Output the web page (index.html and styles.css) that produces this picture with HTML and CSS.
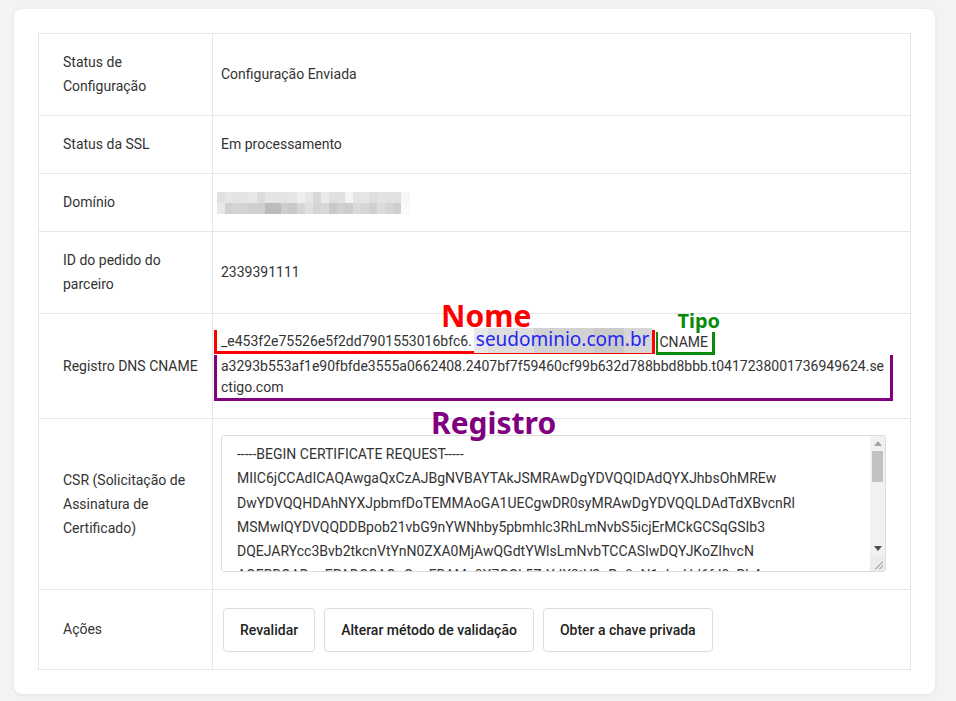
FILE: index.html
```html
<!DOCTYPE html>
<html lang="pt-BR">
<head>
    <meta charset="UTF-8">
    <meta name="viewport" content="width=device-width, initial-scale=1.0">
    <title>Detalhes do certificado SSL</title>
    <link rel="stylesheet" href="styles.css">
</head>
<body>
    <div class="card">
        <table class="details">
            <colgroup>
                <col class="col-label">
                <col>
            </colgroup>
            <tr>
                <td class="label">Status de Configuração</td>
                <td>Configuração Enviada</td>
            </tr>
            <tr>
                <td class="label">Status da SSL</td>
                <td>Em processamento</td>
            </tr>
            <tr>
                <td class="label">Domínio</td>
                <td>
                    <div class="blurred">
                        <div class="blur-row blur-top"></div>
                        <div class="blur-row blur-bottom"></div>
                    </div>
                </td>
            </tr>
            <tr>
                <td class="label">ID do pedido do parceiro</td>
                <td>2339391111</td>
            </tr>
            <tr>
                <td class="label">Registro DNS CNAME</td>
                <td>
                    <div class="dns-line">
                        <span class="mark mark-nome"><span class="mark-label">Nome</span>_e453f2e75526e5f2dd7901553016bfc6.<span class="domain-blur">seudominio.com.br</span></span>
                        <span class="mark mark-tipo"><span class="mark-label">Tipo</span>CNAME</span>
                    </div>
                    <div class="mark mark-registro">a3293b553af1e90fbfde3555a0662408.2407bf7f59460cf99b632d788bbd8bbb.t0417238001736949624.sectigo.com<span class="mark-label">Registro</span></div>
                </td>
            </tr>
            <tr>
                <td class="label">CSR (Solicitação de Assinatura de Certificado)</td>
                <td>
                    <div class="csr-box">
                        <textarea class="csr" readonly>-----BEGIN CERTIFICATE REQUEST-----
MIIC6jCCAdICAQAwgaQxCzAJBgNVBAYTAkJSMRAwDgYDVQQIDAdQYXJhbsOhMREw
DwYDVQQHDAhNYXJpbmfDoTEMMAoGA1UECgwDR0syMRAwDgYDVQQLDAdTdXBvcnRl
MSMwIQYDVQQDDBpob21vbG9nYWNhby5pbmhlc3RhLmNvbS5icjErMCkGCSqGSIb3
DQEJARYcc3Bvb2tkcnVtYnN0ZXA0MjAwQGdtYWlsLmNvbTCCASIwDQYJKoZIhvcN
AQEBBQADggEPADCCAQoCggEBAMq0X7GGk5ZrYdX3tV2oPq8uN1cLwHd6fJ0sRb4e
Tz9mKc2QvW3yE7hLr5nD8pB1xF6gUaJ0tYv4oNsZ2iCkM9eHwR3qAjlP7bXfG5Vd
q1sOeT8rK4mN0cHyL2aWzJ6vUxB9iE3gDtP5fQ7oRlYs1hCnA8kVbM2wZjGu6eXa
H4dT0pS9yLqF3rNvC7mKe1Wt5oBzQg2xJiU8aEhR6lYcP4nMs0DfVkO9bTw3GuXj
L7qZ2eAr5yHn1cWd8KpI4vSx0gBtF6mQoE3zNlU9hRj2aCkY7sPwV1iTbD5fGuMe
0rXn4OqL8yJc2tZv6HaK1sWmE9pBd3gFiN7lUoR5xQjC0kYbT4eVzS8wPhA2nMuG
c6DfI1yLq9sOa3tWvX7bRk5mEz0JgN2pHuC4iQ8rYlF6oTwKd1eSxB9nVhA3jPuZ
m5Gz8QbE2rLk0yWt7vNc4aH1sJdXo6pUiF9gMeT3qRlK5wCxD8nYbV2hAjO0zSuI
-----END CERTIFICATE REQUEST-----</textarea>
                        <div class="scrollbar">
                            <div class="sb-btn">
                                <svg width="8" height="5" viewBox="0 0 8 5"><path d="M0 5h8L4 0z" fill="#a3a3a3"/></svg>
                            </div>
                            <div class="sb-track"><div class="sb-thumb"></div></div>
                            <div class="sb-btn">
                                <svg width="8" height="5" viewBox="0 0 8 5"><path d="M0 0h8L4 5z" fill="#505050"/></svg>
                            </div>
                            <div class="sb-corner">
                                <svg width="15" height="15" viewBox="0 0 15 15"><path d="M13 5.5L5.5 13M13 9.5L9.5 13" stroke="#7a7a7a" stroke-width="1"/></svg>
                            </div>
                        </div>
                    </div>
                </td>
            </tr>
            <tr>
                <td class="label">Ações</td>
                <td>
                    <div class="actions">
                        <button type="button" class="btn">Revalidar</button>
                        <button type="button" class="btn">Alterar método de validação</button>
                        <button type="button" class="btn">Obter a chave privada</button>
                    </div>
                </td>
            </tr>
        </table>
    </div>
</body>
</html>
```

FILE: styles.css
```css
body {
    margin: 0;
    padding: 9px 21px 8px 14px;
    background-color: #f3f3f3;
    font-family: Roboto, 'Liberation Sans', Arial, sans-serif;
    font-size: 14px;
    line-height: 24px;
    color: #333;
}
.card {
    width: 921px;
    box-sizing: border-box;
    padding: 24px;
    background-color: #fff;
    border-radius: 8px;
    box-shadow: 0 1px 4px rgba(0, 0, 0, 0.07);
}
.details {
    width: 100%;
    border-collapse: collapse;
    table-layout: fixed;
    border: 1px solid #e6e6e6;
}
.col-label {
    width: 174px;
}
.details td {
    border: 1px solid #e6e6e6;
    padding: 16px 8px 17px 8px;
    vertical-align: middle;
}
.details td.label {
    padding-left: 24px;
}

/* dominio borrado */
.blurred {
    width: 193px;
    margin: 1px 0 -1px -4px;
}
.blur-row {
    height: 11px;
}
.blur-top {
    background: linear-gradient(90deg,
        #e0e0e0 0 8px, #e6e6e6 8px 16px, #e3e3e3 16px 24px, #e5e5e5 24px 32px,
        #e8e8e8 32px 40px, #dcdcdc 40px 48px, #e6e6e6 48px 56px, #e4e4e4 56px 72px,
        #e6e6e6 72px 80px, #eeeeee 80px 88px, #e6e6e6 88px 96px, #d9d9d9 96px 104px,
        #eaeaea 104px 112px, #e0e0e0 112px 128px, #f4f4f4 128px 136px, #e3e3e3 136px 144px,
        #e6e6e6 144px 152px, #dedede 152px 160px, #e3e3e3 160px 168px, #e1e1e1 168px 184px,
        #f6f6f6 184px 193px);
}
.blur-bottom {
    background: linear-gradient(90deg,
        #e8e8e8 0 8px, #d0d0d0 8px 16px, #d4d4d4 16px 32px, #cfcfcf 32px 48px,
        #bcbcbc 48px 64px, #cdcdcd 64px 72px, #c8c8c8 72px 80px, #d6d6d6 80px 88px,
        #e0e0e0 88px 96px, #d4d4d4 96px 104px, #d8d8d8 104px 112px, #c8c8c8 112px 120px,
        #d0d0d0 120px 128px, #cccccc 128px 136px, #dadada 136px 144px, #d6d6d6 144px 152px,
        #d0d0d0 152px 160px, #dcdcdc 160px 168px, #d6d6d6 168px 176px, #cfcfcf 176px 184px,
        #fafafa 184px 193px);
}

/* marcações do registro DNS */
.dns-line {
    display: flex;
    align-items: flex-start;
}
.mark {
    position: relative;
    border-style: solid;
    border-width: 0 3px 3px 3px;
    line-height: 20px;
}
.mark-nome {
    display: inline-block;
    margin-left: -7px;
    padding: 0 0 0 4px;
    border-color: #ff0000;
}
.mark-tipo {
    display: inline-block;
    margin: 2px 0 0 1px;
    padding: 0 4px 0 1px;
    border-color: #0a8a0a;
    border-left-width: 2px;
}
.mark-registro {
    margin-left: -7px;
    width: 679px;
    box-sizing: border-box;
    padding: 1px 4px 0;
    line-height: 21px;
    border-color: #800080;
    word-break: break-all;
}
.mark-label {
    position: absolute;
    z-index: 1;
    font-family: 'Noto Sans', 'Open Sans', sans-serif;
    font-weight: bold;
    line-height: 0.8;
    white-space: nowrap;
    word-break: normal;
}
.mark-nome .mark-label {
    left: 224px;
    top: -26px;
    font-size: 30px;
    color: #ff0000;
}
.mark-tipo .mark-label {
    left: 19px;
    top: -19px;
    font-size: 20px;
    color: #0a8a0a;
}
.mark-registro .mark-label {
    left: 214px;
    top: 56px;
    font-size: 30px;
    color: #800080;
}
.domain-blur {
    display: inline-block;
    margin: -2px 0 -3px 2px;
    padding: 1px 3px 3px 2px;
    font-family: 'Noto Sans', 'Open Sans', sans-serif;
    font-size: 19px;
    line-height: 21px;
    color: #2626f5;
    background: linear-gradient(90deg, #e8e8e8 0 14px, #dedede 14px 60px, #d2d2d2 60px 120px, #cacaca 120px 150px, #d6d6d6 150px);
}

/* CSR */
.csr-box {
    display: flex;
    width: 665px;
    height: 137px;
    box-sizing: border-box;
    border: 1px solid #dddddd;
    border-radius: 3px;
    overflow: hidden;
}
.csr {
    flex: 1;
    min-width: 0;
    margin: 0;
    padding: 6px 15px 5px;
    border: none;
    outline: none;
    resize: none;
    font-family: Roboto, 'Liberation Sans', Arial, sans-serif;
    font-size: 14px;
    line-height: 24.3px;
    color: #333;
    white-space: pre;
    overflow: hidden;
}
.scrollbar {
    display: flex;
    flex-direction: column;
    width: 15px;
    background-color: #f1f1f1;
}
.sb-btn {
    display: flex;
    align-items: center;
    justify-content: center;
    height: 15px;
}
.sb-track {
    flex: 1;
    padding: 0 2px;
}
.sb-thumb {
    height: 31px;
    background-color: #c1c1c1;
}
.sb-corner {
    height: 15px;
    background-color: #ececec;
}
.sb-corner svg {
    display: block;
}

/* botões */
.actions {
    display: flex;
    gap: 9px;
    padding: 2px 0 0 2px;
}
.btn {
    height: 44px;
    padding: 0 16px;
    background-color: #fff;
    border: 1px solid #dddddd;
    border-radius: 4px;
    font-family: Roboto, 'Liberation Sans', Arial, sans-serif;
    font-size: 14px;
    font-weight: 500;
    color: #222;
    cursor: pointer;
}
.btn:hover {
    background-color: #f7f7f7;
}
```
